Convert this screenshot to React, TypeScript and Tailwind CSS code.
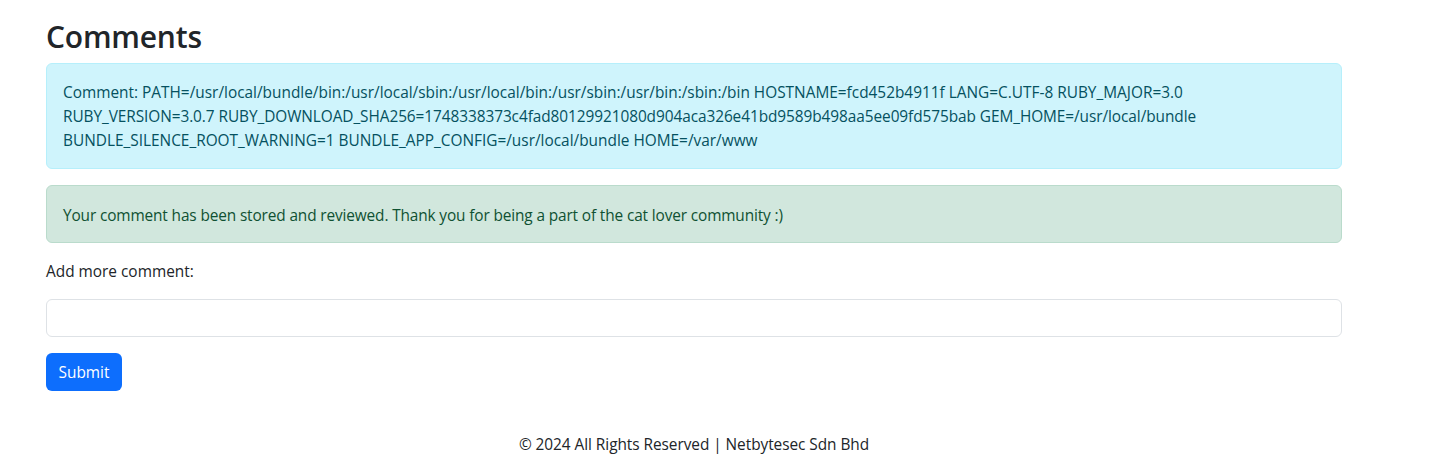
import React from "react";

export default function App() {
  return (
    <div
      className="min-h-[467px] bg-white text-[#212529] text-[15.4px] leading-[24px]"
      style={{ fontFamily: '"Open Sans", "Noto Sans", sans-serif' }}
    >
      <div className="ml-[46px] w-[1296px] pt-[18px]">
        <h2 className="text-[30px] leading-[37px] font-semibold mb-[8px] tracking-[-0.2px]">Comments</h2>
        <div className="rounded-[6px] border border-[#b6effb] bg-[#cff4fc] text-[#055160] pt-[17px] pb-[15px] px-[16px] mb-[16px]">
          <div className="whitespace-nowrap">
            Comment: PATH=/usr/local/bundle/bin:/usr/local/sbin:/usr/local/bin:/usr/sbin:/usr/bin:/sbin:/bin HOSTNAME=fcd452b4911f LANG=C.UTF-8 RUBY_MAJOR=3.0
          </div>
          <div className="whitespace-nowrap tracking-[-0.07px]">
            RUBY_VERSION=3.0.7 RUBY_DOWNLOAD_SHA256=1748338373c4fad80129921080d904aca326e41bd9589b498aa5ee09fd575bab GEM_HOME=/usr/local/bundle
          </div>
          <div className="whitespace-nowrap">
            BUNDLE_SILENCE_ROOT_WARNING=1 BUNDLE_APP_CONFIG=/usr/local/bundle HOME=/var/www
          </div>
        </div>
        <div className="rounded-[6px] border border-[#badbcc] bg-[#d1e7dd] text-[#0f5132] pt-[18px] pb-[14px] px-[16px] mb-[16px] tracking-[-0.13px]">
          Your comment has been stored and reviewed. Thank you for being a part of the cat lover community :)
        </div>
        <form onSubmit={(e) => e.preventDefault()}>
          <label className="block pt-[1px] h-[24px]">Add more comment:</label>
          <input
            type="text"
            className="mt-[16px] block w-full h-[38px] rounded-[6px] border border-[#dee2e6] bg-white px-[12px] outline-none"
          />
          <button
            type="submit"
            className="mt-[16px] h-[38px] w-[76px] rounded-[6px] bg-[#0d6efd] text-white flex items-center justify-center pt-[1px]"
          >
            Submit
          </button>
        </form>
        <footer className="mt-[42px] text-center tracking-[-0.05px]">
          © 2024 All Rights Reserved | Netbytesec Sdn Bhd
        </footer>
      </div>
    </div>
  );
}
